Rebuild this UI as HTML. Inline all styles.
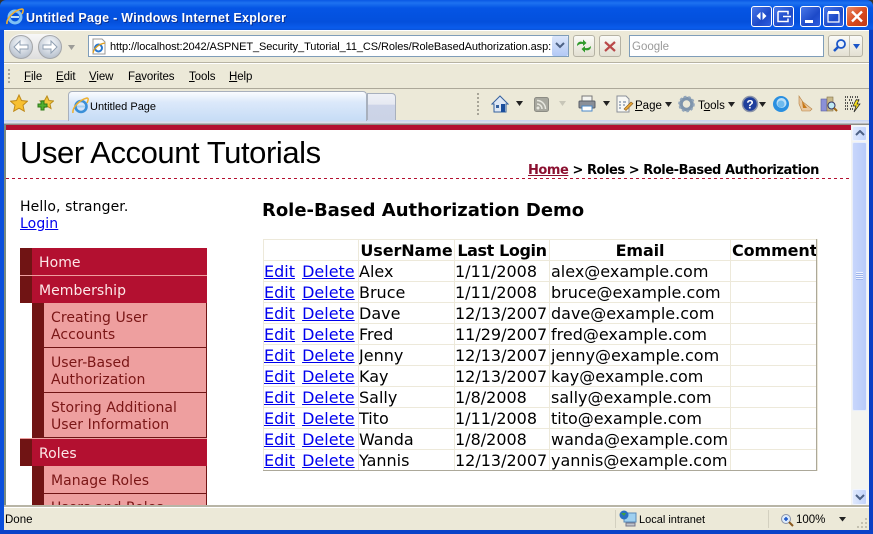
<!DOCTYPE html>
<html><head><meta charset="utf-8"><title>Untitled Page</title>
<style>
html,body{margin:0;padding:0}
body{width:873px;height:534px;overflow:hidden;position:relative;background:#ece9d8;font-family:"DejaVu Sans","Liberation Sans",sans-serif}
.a{position:absolute}
.t{position:absolute;white-space:nowrap}
.ui{font-family:"Liberation Sans",sans-serif;font-size:11.5px;color:#000;line-height:14px}
a{color:#0000ee;text-decoration:underline}
.wb{position:absolute;top:6px;width:19px;height:19px;border:1px solid #fff;border-radius:3px;background:linear-gradient(135deg,#4a78e8,#1c49c8 60%,#2f5fe0);box-sizing:content-box}
.m{position:absolute;font-size:14px;line-height:17px;white-space:nowrap;font-family:"DejaVu Sans",sans-serif;letter-spacing:.05px}
.top{color:#fde8e8}
.sub{color:#7a1616}
td,th{border:1px solid #ede9da;padding:2px 1px 0;white-space:nowrap;font-size:16px;line-height:18px;height:20px;box-sizing:border-box;overflow:hidden}
th{font-weight:bold;text-align:center;letter-spacing:-.1px}
td:first-child{padding-left:0;word-spacing:2px}
td:nth-child(2),td:nth-child(3){padding-left:0}
table{border-collapse:collapse;table-layout:fixed;position:absolute;left:263px;top:239px;width:554px;color:#000;font-family:"DejaVu Sans",sans-serif}
tr{height:21px}
</style></head><body>

<!-- corners -->
<div class="a" style="left:0;top:0;width:873px;height:8px;background:#333"></div>
<!-- title bar -->
<div class="a" style="left:0;top:0;width:873px;height:31px;background:linear-gradient(#0a58e4 0,#1e72f0 3px,#0555e5 8px,#0450dc 22px,#0a5cec 28px,#0a4ed0 31px);border-radius:6px 6px 0 0"></div>
<svg class="a" style="left:6px;top:7px" width="18" height="19" viewBox="0 0 18 19"><ellipse cx="9" cy="10" rx="6" ry="6" fill="none" stroke="#7ec0f4" stroke-width="3"/><path d="M5 10h8" stroke="#bfe0f8" stroke-width="2"/><path d="M1 17C0 12 8 3 16 2c2 0 1 3 0 5" fill="none" stroke="#f0b030" stroke-width="1.6"/></svg>
<div class="t" style="left:26px;top:10px;font:bold 12.5px/16px 'Liberation Sans',sans-serif;color:#fff;text-shadow:1px 1px 0 #0a2f90;letter-spacing:.27px">Untitled Page - Windows Internet Explorer</div>
<div class="wb" style="left:751px"><svg width="19" height="19"><path d="M8.500 5v8L4.500 9zM10.500 5v8l4-4z" fill="#fff"/></svg></div>
<div class="wb" style="left:773px"><svg width="19" height="19"><path d="M4 4.500h10v3M4 4.500v10h10v-3M9 9.500h8" fill="none" stroke="#fff" stroke-width="1.5"/></svg></div>
<div class="wb" style="left:800px"><svg width="19" height="19"><rect x="4" y="13" width="8" height="3" fill="#fff"/></svg></div>
<div class="wb" style="left:823px"><svg width="19" height="19"><path d="M4 6h11v9H4z" fill="none" stroke="#fff" stroke-width="1.2"/><rect x="4" y="4" width="11" height="3" fill="#fff"/></svg></div>
<div class="wb" style="left:846px;width:20px;background:linear-gradient(135deg,#e88a68,#d8481c 55%,#c03a18)"><svg width="20" height="19"><path d="M5 4.500l10 10M15 4.500l-10 10" stroke="#fff" stroke-width="2.400"/></svg></div>

<!-- left/right/bottom frame -->
<div class="a" style="left:0;top:30px;width:4px;height:504px;background:#0a4fdc"></div>
<div class="a" style="left:869px;top:30px;width:4px;height:504px;background:#0a3fc4"></div>
<div class="a" style="left:0;top:530px;width:873px;height:4px;background:#0a43c8"></div>

<!-- address row -->
<div class="a" style="left:4px;top:30px;width:865px;height:32px;background:#ece9d8;border-bottom:1px solid #b7b3a3;box-shadow:0 1px 0 #fff inset"></div>
<div class="a" style="left:8px;top:34px;width:54px;height:25px;border-radius:13px;background:linear-gradient(#f8f8f8,#dedede)"></div>
<svg class="a" style="left:8px;top:34px" width="56" height="26"><defs><radialGradient id="g" cx=".5" cy=".35" r=".7"><stop offset="0" stop-color="#fbfdff"/><stop offset="1" stop-color="#b0bac8"/></radialGradient></defs><circle cx="13" cy="13" r="11.500" fill="url(#g)" stroke="#a4a6a8"/><circle cx="42" cy="13" r="11.500" fill="url(#g)" stroke="#a4a6a8"/><path d="M6 13l6-6v4h8v4h-8v4z" fill="#fff" stroke="#8f9fb2"/><path d="M49 13l-6-6v4h-8v4h8v4z" fill="#fff" stroke="#8f9fb2"/></svg>
<svg class="a" style="left:67px;top:45px" width="9" height="6"><path d="M1 0h7L4.500 5z" fill="#9c9c98"/></svg>
<div class="a" style="left:88px;top:35px;width:481px;height:22px;background:#fff;border:1px solid #7f9db9;box-sizing:border-box;overflow:hidden"></div>
<svg class="a" style="left:91px;top:38px" width="16" height="17"><path d="M2 1h9l3 3v12H2z" fill="#fff" stroke="#999"/><circle cx="7.500" cy="10" r="3.500" fill="none" stroke="#2a78d0" stroke-width="2"/><path d="M2 15C3 10 8 6 14 5" fill="none" stroke="#e0a020" stroke-width="1.300"/></svg>
<div class="t ui" style="left:110px;top:40px;width:441px;overflow:hidden;font-size:11px;letter-spacing:-.09px">http://localhost:2042/ASPNET_Security_Tutorial_11_CS/Roles/RoleBasedAuthorization.asp:</div>
<div class="a" style="left:552px;top:36px;width:16px;height:20px;background:linear-gradient(#dbe6fb,#b3c9f5);border-radius:2px"></div>
<svg class="a" style="left:555px;top:42px" width="10" height="8"><path d="M1 1l4 4 4-4" fill="none" stroke="#4d6185" stroke-width="2"/></svg>
<div class="a" style="left:573px;top:35px;width:22px;height:22px;border:1px solid #b5b2a4;border-radius:3px;background:linear-gradient(#fbfbf8,#e3e0d2);box-sizing:border-box"></div>
<svg class="a" style="left:576px;top:38px" width="16" height="16"><path d="M1 8C1 4 4 3 7 4V1.500L10.500 5 7 8V6C5 5.500 3 6 1 8zM15 8c0 4-3 5-6 4v2.500L5.500 11 9 8v2c2 .5 4 0 6-2z" fill="#2f9a2a"/></svg>
<div class="a" style="left:599px;top:35px;width:22px;height:22px;border:1px solid #b5b2a4;border-radius:3px;background:linear-gradient(#fbfbf8,#e3e0d2);box-sizing:border-box"></div>
<svg class="a" style="left:604px;top:41px" width="12" height="11"><path d="M1 1l10 9M11 1L1 10" stroke="#b9494a" stroke-width="2.200"/></svg>
<div class="a" style="left:629px;top:35px;width:195px;height:22px;background:#fff;border:1px solid #7f9db9;box-sizing:border-box"></div>
<div class="t ui" style="left:632px;top:40px;color:#9a9a9a;font-size:11.500px">Google</div>
<div class="a" style="left:828px;top:35px;width:35px;height:22px;border:1px solid #b5b2a4;border-radius:3px;background:linear-gradient(#fbfbf8,#e3e0d2);box-sizing:border-box"></div>
<div class="a" style="left:849px;top:36px;width:1px;height:20px;background:#c4c1b2"></div>
<svg class="a" style="left:831px;top:38px" width="16" height="16"><circle cx="10" cy="6" r="4" fill="#eaf2fc" stroke="#1a55c8" stroke-width="1.800"/><path d="M7 9l-4 4" stroke="#1a55c8" stroke-width="2.500"/></svg>
<svg class="a" style="left:852px;top:44px" width="9" height="6"><path d="M1 0h7L4.500 5z" fill="#1a55c8"/></svg>

<!-- menu row -->
<div class="a" style="left:4px;top:63px;width:865px;height:25px;background:#ece9d8;border-bottom:1px solid #aca899;box-shadow:0 1px 0 #fff inset"></div>
<div class="a" style="left:8px;top:69px;width:2px;height:14px;background:repeating-linear-gradient(#a8a598 0 2px,transparent 2px 4px)"></div>
<div class="t ui" style="left:24px;top:70px;letter-spacing:-.1px"><u>F</u>ile</div>
<div class="t ui" style="left:56px;top:70px;letter-spacing:-.1px"><u>E</u>dit</div>
<div class="t ui" style="left:89px;top:70px;letter-spacing:-.1px"><u>V</u>iew</div>
<div class="t ui" style="left:128px;top:70px;letter-spacing:-.1px">F<u>a</u>vorites</div>
<div class="t ui" style="left:189px;top:70px;letter-spacing:-.1px"><u>T</u>ools</div>
<div class="t ui" style="left:229px;top:70px;letter-spacing:-.1px"><u>H</u>elp</div>

<!-- tab row -->
<div class="a" style="left:4px;top:89px;width:865px;height:31px;background:#ece9d8"></div>
<div class="a" style="left:4px;top:120px;width:865px;height:5px;background:linear-gradient(#c6d3f0,#dfe3ee 3px,#8d8d86 4px)"></div>
<svg class="a" style="left:10px;top:94px" width="18" height="18"><path d="M9 1l2.500 5.500 6 .7-4.500 4 1.300 6L9 14.200 3.700 17.200 5 11.200.5 7.200l6-.7z" fill="#f8c030" stroke="#c08a18"/></svg>
<svg class="a" style="left:37px;top:95px" width="17" height="17"><path d="M10 1l2 4.500 4.500.5-3.500 3 1 4.500-4-2.300-4 2.300 1-4.500L3 6l4.500-.5z" fill="#f4c63c" stroke="#b98c1c"/><path d="M1 9h3V6h3v3h3v3H7v3H4v-3H1z" fill="#50b030" stroke="#2f7a1a"/></svg>
<div class="a" style="left:68px;top:91px;width:299px;height:30px;border:1px solid #a8b0bd;border-bottom:0;border-radius:4px 4px 0 0;background:linear-gradient(#fafcff,#dce9fa 35%,#c6dcf6);box-sizing:border-box"></div>
<svg class="a" style="left:72px;top:97px" width="17" height="18"><ellipse cx="9" cy="9.500" rx="5.500" ry="5.500" fill="none" stroke="#3a8fd8" stroke-width="2.600"/><path d="M5 9.500h8" stroke="#a8d0f0" stroke-width="2"/><path d="M1 16C0 11 7 3 15 1c2 0 1 3 0 5" fill="none" stroke="#eeb030" stroke-width="1.500"/></svg>
<div class="t ui" style="left:90px;top:100px;font-size:11px">Untitled Page</div>
<div class="a" style="left:367px;top:93px;width:29px;height:27px;border:1px solid #a8b0bd;border-bottom:0;border-radius:0 4px 0 0;background:linear-gradient(#eef0f6 0,#e6e9f2 40%,#cdd4e8 42%,#cbd3e6);box-sizing:border-box"></div>

<!-- command bar -->
<div class="a" style="left:477px;top:93px;width:2px;height:23px;background:repeating-linear-gradient(#a8a598 0 2px,transparent 2px 4px)"></div>
<svg class="a" style="left:491px;top:95px" width="18" height="18"><path d="M1 9l8-8 8 8h-2v8H3V9z" fill="#dfe8f4" stroke="#35619e"/><rect x="10" y="9" width="4" height="8" fill="#1a4e9c"/><rect x="5" y="10" width="3" height="3" fill="#35619e"/></svg>
<svg class="a" style="left:515px;top:101px" width="9" height="6"><path d="M1 0h7L4.500 5z" fill="#222"/></svg>
<svg class="a" style="left:534px;top:97px" width="16" height="16"><rect x=".5" y=".5" width="14" height="14" rx="2" fill="#a8a89f" stroke="#8c8c84"/><circle cx="4" cy="11" r="1.500" fill="#e8e8e0"/><path d="M3 7a5 5 0 015 5M3 3.500A8.500 8.500 0 0111.500 12" fill="none" stroke="#e8e8e0" stroke-width="1.500"/></svg>
<svg class="a" style="left:558px;top:101px" width="9" height="6"><path d="M1 0h7L4.500 5z" fill="#c8c6b8"/></svg>
<svg class="a" style="left:578px;top:95px" width="18" height="18"><rect x="4" y="1" width="10" height="6" fill="#f4f4f0" stroke="#777"/><rect x="1" y="6" width="16" height="7" rx="1" fill="#8a8f98" stroke="#5a5f68"/><rect x="4" y="11" width="10" height="5" fill="#fff" stroke="#4a88c8"/></svg>
<svg class="a" style="left:602px;top:101px" width="9" height="6"><path d="M1 0h7L4.500 5z" fill="#222"/></svg>
<svg class="a" style="left:616px;top:95px" width="18" height="18"><path d="M1 1h9l3 3v13H1z" fill="#f8f8f4" stroke="#8a8f98"/><path d="M3 7h2M7 7h3M3 10h2M7 10h2M3 13h2" stroke="#5a6f90"/><path d="M8 14l7-7 2 1.500-7 7z" fill="#e8a838" stroke="#8a5a18" stroke-width=".6"/></svg>
<div class="t ui" style="left:635px;top:99px"><u>P</u>age</div>
<svg class="a" style="left:664px;top:102px" width="9" height="6"><path d="M1 0h7L4.500 5z" fill="#222"/></svg>
<svg class="a" style="left:678px;top:95px" width="17" height="18"><circle cx="8.500" cy="9" r="5.500" fill="none" stroke="#7e94ac" stroke-width="3.500"/><circle cx="8.500" cy="9" r="7.300" fill="none" stroke="#93a6ba" stroke-width="2" stroke-dasharray="2.500 2"/></svg>
<div class="t ui" style="left:698px;top:99px">T<u>o</u>ols</div>
<svg class="a" style="left:727px;top:102px" width="9" height="6"><path d="M1 0h7L4.500 5z" fill="#222"/></svg>
<svg class="a" style="left:741px;top:95px" width="18" height="18"><circle cx="9" cy="9" r="7.500" fill="#1f3f9c" stroke="#8a93a8" stroke-width="1.500"/><text x="9" y="13.500" font-family="Liberation Sans,sans-serif" font-size="12" font-weight="bold" fill="#fff" text-anchor="middle">?</text></svg>
<svg class="a" style="left:758px;top:102px" width="9" height="6"><path d="M1 0h7L4.500 5z" fill="#222"/></svg>
<svg class="a" style="left:772px;top:95px" width="18" height="18"><circle cx="9" cy="9" r="8" fill="#2a8fe0"/><circle cx="9.500" cy="8" r="5" fill="#bce0f8"/><circle cx="9" cy="9" r="3.500" fill="#3aa0e8" opacity=".6"/></svg>
<svg class="a" style="left:796px;top:95px" width="18" height="18"><path d="M3 1l4 6 9 7-2 2H6L3 9z" fill="#e8c8a0" stroke="#b88040" stroke-width=".6"/><path d="M6 6l5 7H7z" fill="#c87818"/></svg>
<svg class="a" style="left:820px;top:95px" width="18" height="18"><rect x="1" y="4" width="6" height="12" fill="#8a90d8" stroke="#5a60a0" stroke-width=".6"/><rect x="7" y="2" width="6" height="14" fill="#c8b888" stroke="#80704a" stroke-width=".6"/><circle cx="11.500" cy="10.500" r="3.500" fill="#bfeaf4" stroke="#336"/><path d="M14 13l3 3" stroke="#a06a18" stroke-width="2"/></svg>
<svg class="a" style="left:844px;top:95px" width="18" height="18"><path d="M1 2h3M6 2h3M11 2h3M1 5h2M5 5h3M12 5h3M1 8h3M6 8h3M1 11h3M7 11h1M1 14h3M6 14h3" stroke="#222" stroke-width="1.500" stroke-dasharray="1 1"/><path d="M12 5l-3 6h3l-2 6 6-8h-3l2-4z" fill="#f8e020" stroke="#222" stroke-width=".7"/></svg>

<!-- content -->
<div class="a" style="left:4px;top:124px;width:2px;height:382px;background:#7a8a80"></div>
<div class="a" style="left:6px;top:125px;width:845px;height:380px;background:#fff;overflow:hidden">
  <div class="a" style="left:0;top:0;width:845px;height:5px;background:#b31030"></div>
  <div class="a" style="left:0;top:53px;width:845px;height:1px;background:repeating-linear-gradient(90deg,#b31030 0 3px,transparent 3px 6px)"></div>
  <div class="a" style="left:14px;top:123px;width:187px;height:300px">
    <div class="a" style="left:0;top:0;width:12px;height:27px;background:#701414"></div>
    <div class="a" style="left:12px;top:0;width:175px;height:27px;background:#b31030"></div>
    <div class="a" style="left:0;top:27px;width:187px;height:1px;background:#ee9f9f"></div>
    <div class="a" style="left:0;top:28px;width:12px;height:27px;background:#701414"></div>
    <div class="a" style="left:12px;top:28px;width:175px;height:27px;background:#b31030"></div>
    <div class="a" style="left:12px;top:55px;width:12px;height:135px;background:#701414"></div>
    <div class="a" style="left:24px;top:55px;width:162px;height:135px;background:#ee9f9f;border-right:1px solid #701414"></div>
    <div class="a" style="left:24px;top:99px;width:163px;height:1px;background:#701414"></div>
    <div class="a" style="left:24px;top:144px;width:163px;height:1px;background:#701414"></div>
    <div class="a" style="left:24px;top:189px;width:163px;height:1px;background:#701414"></div>
    <div class="a" style="left:0;top:190px;width:187px;height:1px;background:#ee9f9f"></div>
    <div class="a" style="left:0;top:191px;width:12px;height:27px;background:#701414"></div>
    <div class="a" style="left:12px;top:191px;width:175px;height:27px;background:#b31030"></div>
    <div class="a" style="left:12px;top:218px;width:12px;height:60px;background:#701414"></div>
    <div class="a" style="left:24px;top:218px;width:162px;height:60px;background:#ee9f9f;border-right:1px solid #701414"></div>
    <div class="a" style="left:24px;top:245px;width:163px;height:1px;background:#701414"></div>
    <div class="m top" style="left:19px;top:7px">Home</div>
    <div class="m top" style="left:19px;top:35px">Membership</div>
    <div class="m sub" style="left:31px;top:62px">Creating User<br>Accounts</div>
    <div class="m sub" style="left:31px;top:107px">User-Based<br>Authorization</div>
    <div class="m sub" style="left:31px;top:152px">Storing Additional<br>User Information</div>
    <div class="m top" style="left:19px;top:198px">Roles</div>
    <div class="m sub" style="left:31px;top:225px">Manage Roles</div>
    <div class="m sub" style="left:31px;top:252px">Users and Roles</div>
  </div>
</div>
<div class="t" style="left:20px;top:135px;font:31px/36px 'Liberation Sans',sans-serif;color:#000;letter-spacing:-.43px">User Account Tutorials</div>
<div class="t" style="left:528px;top:162px;font:bold 13px/17px 'DejaVu Sans',sans-serif;color:#000;letter-spacing:-.45px"><a href="#" style="color:#8b1030">Home</a> &gt; Roles &gt; Role-Based Authorization</div>
<div class="t" style="left:20px;top:199px;font:14px/17px 'DejaVu Sans',sans-serif;color:#000;letter-spacing:.1px">Hello, stranger.<br><a href="#">Login</a></div>
<div class="t" style="left:262px;top:200px;font:bold 18px/22px 'DejaVu Sans',sans-serif;color:#000;letter-spacing:-.02px">Role-Based Authorization Demo</div>

<table>
<colgroup><col style="width:95px"><col style="width:96px"><col style="width:95px"><col style="width:181px"><col style="width:87px"></colgroup>
<tr><th></th><th>UserName</th><th style="letter-spacing:-.4px">Last Login</th><th>Email</th><th>Comment</th></tr>
<tr><td><a href="#">Edit</a> <a href="#">Delete</a></td><td>Alex</td><td>1/11/2008</td><td>alex@example.com</td><td></td></tr>
<tr><td><a href="#">Edit</a> <a href="#">Delete</a></td><td>Bruce</td><td>1/11/2008</td><td>bruce@example.com</td><td></td></tr>
<tr><td><a href="#">Edit</a> <a href="#">Delete</a></td><td>Dave</td><td>12/13/2007</td><td>dave@example.com</td><td></td></tr>
<tr><td><a href="#">Edit</a> <a href="#">Delete</a></td><td>Fred</td><td>11/29/2007</td><td>fred@example.com</td><td></td></tr>
<tr><td><a href="#">Edit</a> <a href="#">Delete</a></td><td>Jenny</td><td>12/13/2007</td><td>jenny@example.com</td><td></td></tr>
<tr><td><a href="#">Edit</a> <a href="#">Delete</a></td><td>Kay</td><td>12/13/2007</td><td>kay@example.com</td><td></td></tr>
<tr><td><a href="#">Edit</a> <a href="#">Delete</a></td><td>Sally</td><td>1/8/2008</td><td>sally@example.com</td><td></td></tr>
<tr><td><a href="#">Edit</a> <a href="#">Delete</a></td><td>Tito</td><td>1/11/2008</td><td>tito@example.com</td><td></td></tr>
<tr><td><a href="#">Edit</a> <a href="#">Delete</a></td><td>Wanda</td><td>1/8/2008</td><td>wanda@example.com</td><td></td></tr>
<tr><td><a href="#">Edit</a> <a href="#">Delete</a></td><td>Yannis</td><td>12/13/2007</td><td>yannis@example.com</td><td></td></tr>
</table>
<div class="a" style="left:816px;top:239px;width:1px;height:232px;background:#aca899"></div>
<div class="a" style="left:263px;top:470px;width:554px;height:1px;background:#aca899"></div>

<!-- scrollbar -->
<div class="a" style="left:851px;top:125px;width:18px;height:381px;background:#f4f4f0"></div>
<div class="a" style="left:852px;top:126px;width:15px;height:15px;background:linear-gradient(90deg,#dfe9fd,#c2d3fb);border:1px solid #f0f4ff;box-sizing:border-box;border-radius:2px"></div>
<svg class="a" style="left:855px;top:130px" width="10" height="7"><path d="M1 5l4-4 4 4" fill="none" stroke="#4d6185" stroke-width="2"/></svg>
<div class="a" style="left:852px;top:142px;width:15px;height:269px;background:linear-gradient(90deg,#c8d6fb,#b8cbfa);border:1px solid #e8eefc;box-sizing:border-box;border-radius:2px"></div>
<div class="a" style="left:856px;top:272px;width:7px;height:8px;background:repeating-linear-gradient(#eef2ff 0 1px,#9db4ea 1px 2px)"></div>
<div class="a" style="left:852px;top:489px;width:15px;height:16px;background:linear-gradient(90deg,#dfe9fd,#c2d3fb);border:1px solid #f0f4ff;box-sizing:border-box;border-radius:2px"></div>
<svg class="a" style="left:855px;top:494px" width="10" height="7"><path d="M1 1l4 4 4-4" fill="none" stroke="#4d6185" stroke-width="2"/></svg>

<!-- status bar -->
<div class="a" style="left:4px;top:505px;width:865px;height:25px;background:#ece9d8;border-top:2px solid #b8b5a6;box-sizing:border-box;box-shadow:0 1px 0 #fff inset"></div>
<div class="t ui" style="left:5px;top:513px">Done</div>
<div class="a" style="left:615px;top:510px;width:1px;height:18px;background:#d3d0c0"></div>
<svg class="a" style="left:619px;top:510px" width="18" height="18"><rect x="5" y="3" width="12" height="9" fill="#9ed0f0" stroke="#5a8ab8"/><rect x="7" y="13" width="9" height="3" fill="#c0c4cc" stroke="#778"/><circle cx="5" cy="5" r="4.500" fill="#2a70c0"/><path d="M2 3l3 3 2-3z" fill="#40a040"/></svg>
<div class="t ui" style="left:639px;top:513px;font-size:11px">Local intranet</div>
<div class="a" style="left:768px;top:510px;width:1px;height:18px;background:#d3d0c0"></div>
<svg class="a" style="left:780px;top:513px" width="14" height="14"><circle cx="6" cy="6" r="4.500" fill="#dceafa" stroke="#8a93a8"/><path d="M4 6h4M6 4v4" stroke="#1a55c8" stroke-width="1.500"/><path d="M9 9l4 4" stroke="#8a5a20" stroke-width="2"/></svg>
<div class="t ui" style="left:796px;top:513px">100%</div>
<svg class="a" style="left:838px;top:517px" width="9" height="6"><path d="M1 0h7L4.500 4.500z" fill="#222"/></svg>
<svg class="a" style="left:857px;top:517px" width="11" height="12"><path d="M8 1h2v2H8zM4 5h2v2H4zM8 5h2v2H8zM0 9h2v2H0zM4 9h2v2H4zM8 9h2v2H8z" fill="#c4c1b0"/></svg>
</body></html>
